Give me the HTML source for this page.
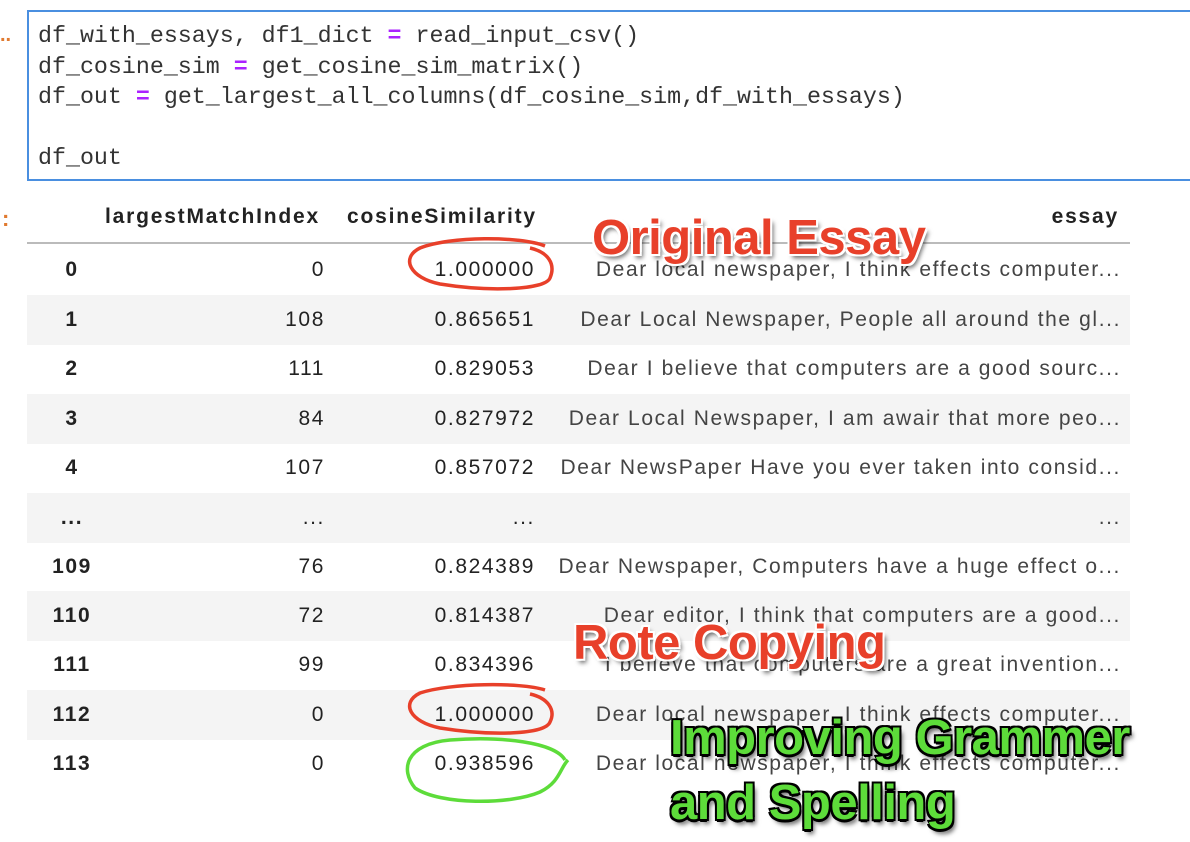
<!DOCTYPE html>
<html><head><style>
body{margin:0;width:1190px;height:842px;background:#fff;position:relative;overflow:hidden;font-family:"Liberation Sans",sans-serif}
.code{position:absolute;left:27px;top:10px;width:1180px;height:171px;border:2px solid #4a8fe0;box-sizing:border-box;background:#fff}
.code pre{margin:0;position:absolute;left:9px;top:9px;font:23.3px/30.5px "Liberation Mono",monospace;color:#333}
.eq{color:#aa22ff;font-weight:bold}
.pr{position:absolute;color:#e07a30;font-weight:bold}
.row{position:absolute;left:27px;width:1103px;height:49.5px;font-size:21px;letter-spacing:1.6px;color:#222}
.row.g{background:#f4f4f4}
.row span{position:absolute;top:13px;white-space:nowrap}
.i{left:0;width:90px;text-align:center;font-weight:bold}
.a{right:805px}.b{right:595px}.c{right:9px;color:#444}
.hd{position:absolute;top:205px;font-size:21px;letter-spacing:1.8px;font-weight:bold;color:#222}
.ann{position:absolute;font-weight:bold;white-space:nowrap;letter-spacing:-0.5px}
.red{color:#e8402a;font-size:49px;text-shadow:-2px -2px 0 #fff,2px -2px 0 #fff,-2px 2px 0 #fff,2px 2px 0 #fff,3px 4px 5px rgba(0,0,0,.6)}
.grn{color:#5ddc3a;font-size:49px;text-shadow:-2px -2px 0 #000,2px -2px 0 #000,-2px 2px 0 #000,2px 2px 0 #000,0 3px 0 #000,3px 5px 5px rgba(0,0,0,.6)}
</style></head><body>
<div class="pr" style="left:0;top:24px;font-size:20px">..</div>
<div class="code"><pre>df_with_essays, df1_dict <span class="eq">=</span> read_input_csv()
df_cosine_sim <span class="eq">=</span> get_cosine_sim_matrix()
df_out <span class="eq">=</span> get_largest_all_columns(df_cosine_sim,df_with_essays)

df_out</pre></div>
<div class="pr" style="left:2px;top:206px;font-size:22px">:</div>
<div class="hd" style="left:105px">largestMatchIndex</div>
<div class="hd" style="left:347px">cosineSimilarity</div>
<div class="hd" style="right:71px">essay</div>
<div style="position:absolute;left:27px;top:242px;width:1103px;height:2px;background:#bbb"></div>

<div class="row" style="top:245px"><span class="i">0</span><span class="a">0</span><span class="b">1.000000</span><span class="c">Dear local newspaper, I think effects computer...</span></div>
<div class="row g" style="top:295px"><span class="i">1</span><span class="a">108</span><span class="b">0.865651</span><span class="c">Dear Local Newspaper, People all around the gl...</span></div>
<div class="row" style="top:344px"><span class="i">2</span><span class="a">111</span><span class="b">0.829053</span><span class="c">Dear I believe that computers are a good sourc...</span></div>
<div class="row g" style="top:394px"><span class="i">3</span><span class="a">84</span><span class="b">0.827972</span><span class="c">Dear Local Newspaper, I am awair that more peo...</span></div>
<div class="row" style="top:443px"><span class="i">4</span><span class="a">107</span><span class="b">0.857072</span><span class="c">Dear NewsPaper Have you ever taken into consid...</span></div>
<div class="row g" style="top:493px"><span class="i">...</span><span class="a">...</span><span class="b">...</span><span class="c">...</span></div>
<div class="row" style="top:542px"><span class="i">109</span><span class="a">76</span><span class="b">0.824389</span><span class="c">Dear Newspaper, Computers have a huge effect o...</span></div>
<div class="row g" style="top:591px"><span class="i">110</span><span class="a">72</span><span class="b">0.814387</span><span class="c">Dear editor, I think that computers are a good...</span></div>
<div class="row" style="top:640px"><span class="i">111</span><span class="a">99</span><span class="b">0.834396</span><span class="c">I believe that computers are a great invention...</span></div>
<div class="row g" style="top:690px"><span class="i">112</span><span class="a">0</span><span class="b">1.000000</span><span class="c">Dear local newspaper, I think effects computer...</span></div>
<div class="row" style="top:739px"><span class="i">113</span><span class="a">0</span><span class="b">0.938596</span><span class="c">Dear local newspaper, I think effects computer...</span></div>

<svg style="position:absolute;left:0;top:0" width="1190" height="842">
<path d="M545 246 C520 236 450 236 420 248 C400 258 410 278 440 284 C490 292 545 290 550 278 C556 264 548 252 530 248" fill="none" stroke="#e8402a" stroke-width="3.5"/>
<path d="M545 690 C520 682 450 683 420 693 C400 703 410 722 440 728 C490 736 545 735 550 722 C556 710 548 698 530 694" fill="none" stroke="#e8402a" stroke-width="3.5"/>
<path d="M565 760 C555 742 500 736 450 740 C405 744 400 770 415 788 C440 805 510 805 540 792 C560 782 560 768 568 760" fill="none" stroke="#5ddc3a" stroke-width="3.5"/>
</svg>
<div class="ann red" style="left:592px;top:210px">Original Essay</div>
<div class="ann red" style="left:573px;top:615px">Rote Copying</div>
<div class="ann grn" style="left:670px;top:710px">Improving Grammer</div>
<div class="ann grn" style="left:670px;top:775px">and Spelling</div>
</body></html>
